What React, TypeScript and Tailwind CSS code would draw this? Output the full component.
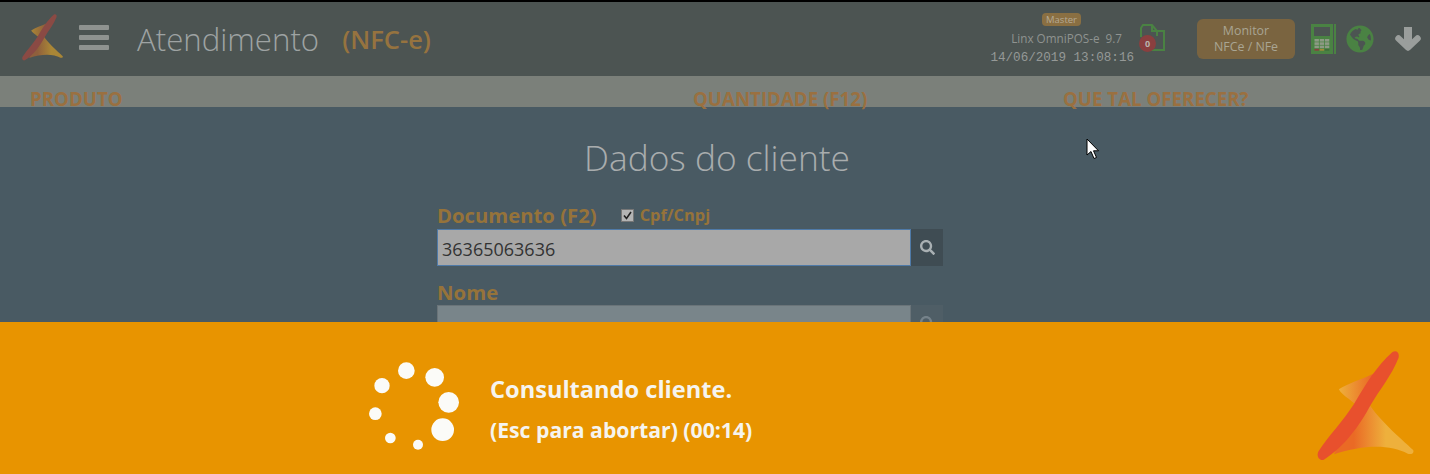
import { useId } from "react"
import { FaGlobeAmericas, FaSearch } from "react-icons/fa"

function Logo({ width, height, blade, mid, tip }: { width: number; height: number; blade: string; mid: string; tip: string }) {
  const id = useId()
  return (
    <svg width={width} height={height} viewBox="80 35 290 330" className="shrink-0">
      <defs>
        <linearGradient id={`${id}a`} x1="145" y1="0" x2="245" y2="0" gradientUnits="userSpaceOnUse">
          <stop offset="0" stopColor={tip} />
          <stop offset="1" stopColor={mid} />
        </linearGradient>
        <linearGradient id={`${id}b`} x1="190" y1="0" x2="365" y2="0" gradientUnits="userSpaceOnUse">
          <stop offset="0" stopColor={mid} />
          <stop offset="0.55" stopColor={tip} />
          <stop offset="1" stopColor={tip} />
        </linearGradient>
      </defs>
      <path d="M145 150 C175 130 215 120 255 100 L215 215 C190 185 155 170 145 150 Z" fill={`url(#${id}a)`} />
      <path
        d="M225 175 C255 235 330 295 368 332 C372 342 362 346 352 343 C300 315 220 315 130 345 Z"
        fill={`url(#${id}b)`}
      />
      <path
        d="M306 38 C318 32 328 40 324 56 C304 108 268 150 240 198 C210 255 160 325 100 361 C88 366 76 352 84 336 C118 285 158 245 190 195 C222 140 258 80 306 38 Z"
        fill={blade}
      />
    </svg>
  )
}

function Spinner() {
  const dots = [
    [169, 92, 25],
    [254, 112, 28],
    [296, 187, 31],
    [278, 269, 34],
    [204, 314, 15],
    [121, 294, 16],
    [76, 221, 19],
    [96, 137, 23],
  ]
  return (
    <svg width={95} height={90} viewBox="54 60 285 270" className="shrink-0">
      {dots.map(([cx, cy, r]) => (
        <circle key={cx} cx={cx} cy={cy} r={r} fill="#fbfbf8" />
      ))}
    </svg>
  )
}

function FilesIcon() {
  return (
    <div className="relative w-[27px] h-[30px]">
      <svg width={27} height={30} viewBox="0 0 27 30" fill="none" stroke="#4a8243" strokeWidth="2">
        <path d="M2 13 V4 L4 1 H13 L18 7 V12" />
        <path d="M13 1 V7 H25 V26 H10" />
      </svg>
      <div className="absolute left-0 top-[11px] w-[17px] h-[17px] rounded-full bg-[#8a3f3f] text-[#b9b4ae] text-[9px] font-bold leading-[17px] text-center">0</div>
    </div>
  )
}

function PosIcon() {
  const keys = ["#8d9a85", "#8d9a85", "#8d9a85", "#8d9a85", "#8d9a85", "#8d9a85", "#8d9a85", "#8d9a85", "#8d9a85", "#8a3f3f", "#a08a35", "#3f6d3a"]
  return (
    <svg width={25} height={30} viewBox="0 0 25 30" className="shrink-0">
      <rect x="0" y="0" width="22" height="30" fill="#4a8243" />
      <rect x="23" y="0" width="2" height="30" fill="#4a8243" />
      <rect x="3" y="3" width="16" height="9" fill="#4c5452" />
      {keys.map((color, i) => (
        <rect key={i} x={3.5 + (i % 3) * 5.2} y={15 + Math.floor(i / 3) * 3.3} width="4.4" height={i > 8 ? 1.8 : 2.6} fill={color} />
      ))}
    </svg>
  )
}

function ArrowDownIcon() {
  return (
    <svg width={26} height={26} viewBox="0 0 26 26" fill="none" stroke="#9a9e9c" className="shrink-0">
      <path d="M13 1 V21" strokeWidth="8" />
      <path d="M3.5 12.5 L13 21.5 L22.5 12.5" strokeWidth="6.5" strokeLinecap="round" strokeLinejoin="round" />
    </svg>
  )
}

function Cursor() {
  return (
    <svg width={14} height={22} viewBox="0 0 14 22" className="absolute left-[1086px] top-[138px]">
      <path d="M1 1 V17 L5 13.5 L8 20.5 L10.5 19.5 L7.5 12.8 H12.5 Z" fill="#fff" stroke="#000" strokeWidth="1" />
    </svg>
  )
}

export default function App() {
  return (
    <div className="relative h-[474px] w-full overflow-hidden flex flex-col bg-[#495a63] font-['Open_Sans',sans-serif]">
      {/* header */}
      <header className="h-[76px] shrink-0 border-t-2 border-black bg-[#4c5452] flex items-center">
        <div className="ml-[22px] mt-[-3px]">
          <Logo width={41} height={47} blade="#8a4a44" mid="#8f5f3c" tip="#a98636" />
        </div>
        <div className="ml-[16px] mt-[-3px] flex flex-col gap-[5px] w-[30px]">
          <div className="h-[5px] rounded-[1px] bg-[#8f9390]" />
          <div className="h-[5px] rounded-[1px] bg-[#8f9390]" />
          <div className="h-[5px] rounded-[1px] bg-[#8f9390]" />
        </div>
        <h1 className="ml-[28px] text-[31.2px] font-light leading-none text-[#9ea3a3] mt-[1px]">Atendimento</h1>
        <span className="ml-[23px] text-[25.5px] font-semibold leading-none text-[#96733f] mt-[1px]">(NFC-e)</span>

        <div className="ml-auto flex items-center">
          <div className="w-[145px] flex flex-col items-end">
            <span className="mr-[53px] px-[4px] h-[13px] rounded-[4px] bg-[#8a6f42] text-[#b5aa96] text-[9.5px] leading-[13px]">Master</span>
            <span className="mt-[4px] mr-[12px] text-[11.7px] leading-[16px] text-[#8f9390]">Linx OmniPOS-e&nbsp; 9.7</span>
            <span className="mt-[5px] font-['Liberation_Mono',monospace] text-[12.6px] leading-[14px] text-[#959997]">14/06/2019 13:08:16</span>
          </div>
          <div className="ml-[5px] mr-[31px]">
            <FilesIcon />
          </div>
          <button className="w-[98px] h-[40px] rounded-[6px] bg-[#7a6440] text-[#a9a593] text-[12.4px] leading-[16px]">
            Monitor
            <br />
            NFCe / NFe
          </button>
          <div className="ml-[16px]">
            <PosIcon />
          </div>
          <FaGlobeAmericas className="ml-[10px] text-[#4a8243]" size={28} />
          <div className="ml-[21px] mr-[9px]">
            <ArrowDownIcon />
          </div>
        </div>
      </header>

      {/* sub-header */}
      <div className="h-[31px] shrink-0 bg-[#7b807a] flex items-start pt-[14px] text-[18.7px] font-bold leading-[18px] text-[#9a7040]">
        <div className="w-[693px] pl-[30px]">PRODUTO</div>
        <div className="w-[370px]">QUANTIDADE (F12)</div>
        <div>QUE TAL OFERECER?</div>
      </div>

      {/* form */}
      <main className="flex-1 overflow-hidden flex flex-col items-center min-h-0">
        <h2 className="mt-[25px] ml-[4px] text-[35.3px] font-light leading-[50px] text-[#a9adae]">Dados do cliente</h2>
        <div className="w-[506px] mt-[21px] mr-[50px]">
          <div className="flex items-center h-[26px] pb-[2px]">
            <label className="text-[20.3px] font-bold leading-[24px] text-[#96733a]">Documento (F2)</label>
            <div className="ml-[24px] w-[13px] h-[13px] bg-[#b4b4b4] border border-[#777] flex items-center justify-center">
              <svg width={11} height={11} viewBox="0 0 11 11" fill="none" stroke="#222" strokeWidth="1.6">
                <path d="M2 5.5 L4.5 8.5 L9 2" />
              </svg>
            </div>
            <span className="ml-[6px] text-[16.4px] font-bold leading-[24px] text-[#96733a]">Cpf/Cnpj</span>
          </div>
          <div className="flex h-[37px]">
            <div className="flex-1 border border-[#4f7aa8] bg-[#a8a8a8] pl-[4px] text-[18px] leading-[38px] text-[#333]">36365063636</div>
            <div className="w-[32px] bg-[#3f4c53] flex items-center justify-center">
              <FaSearch className="text-[#a9b0b3]" size={15} />
            </div>
          </div>
          <label className="block mt-[13px] text-[20.4px] font-bold leading-[26px] text-[#96733a]">Nome</label>
          <div className="flex h-[37px]">
            <div className="flex-1 border border-[#6a7479] bg-[#79858a]" />
            <div className="w-[32px] bg-[#4f5e66] flex items-center justify-center">
              <FaSearch className="text-[#75828a]" size={15} />
            </div>
          </div>
        </div>
      </main>

      {/* loading bar */}
      <footer className="h-[152px] shrink-0 bg-[#e89400] flex items-start text-[#f6f4ef] font-bold">
        <div className="ml-[368px] mt-[38px]">
          <Spinner />
        </div>
        <div className="ml-[27px] mt-[51px]">
          <p className="text-[23.6px] leading-[32px]">Consultando cliente.</p>
          <p className="mt-[9px] text-[21.2px] leading-[32px]">(Esc para abortar) (00:14)</p>
        </div>
        <div className="ml-auto mr-[16px] mt-[29px]">
          <Logo width={97} height={110} blade="#e8502d" mid="#ea6a25" tip="#eeb03c" />
        </div>
      </footer>

      <Cursor />
    </div>
  )
}
